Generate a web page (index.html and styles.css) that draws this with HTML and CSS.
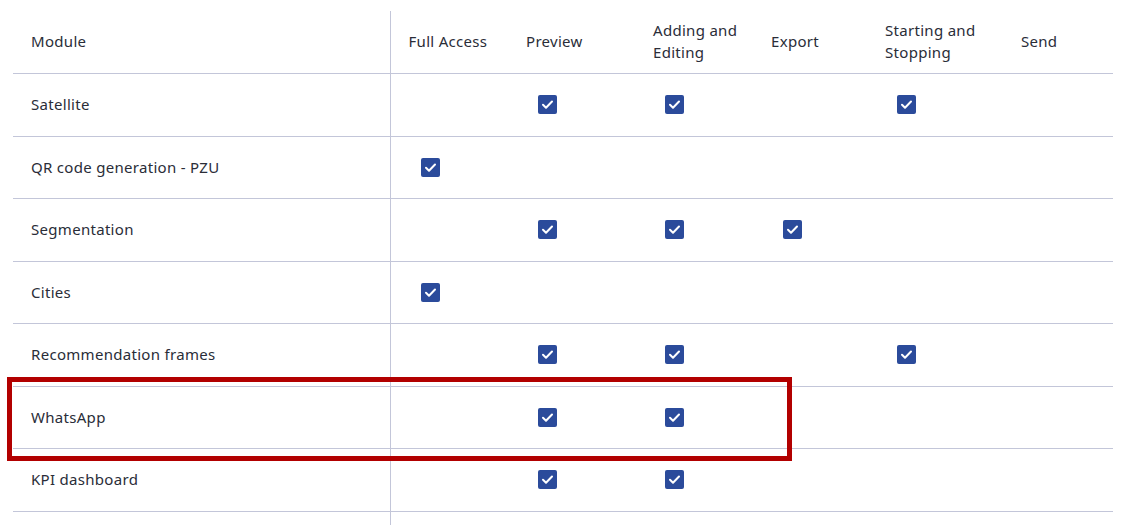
FILE: index.html
```html
<!DOCTYPE html>
<html>
<head>
<meta charset="utf-8">
<link rel="stylesheet" href="styles.css">
</head>
<body>
<div class="page">
  <table class="perm">
    <colgroup>
      <col class="c-mod"><col class="c-full"><col class="c-prev"><col class="c-add"><col class="c-exp"><col class="c-start"><col class="c-send">
    </colgroup>
    <thead>
      <tr>
        <th class="mod">Module</th>
        <th>Full Access</th>
        <th>Preview</th>
        <th>Adding and<br>Editing</th>
        <th>Export</th>
        <th>Starting and<br>Stopping</th>
        <th>Send</th>
      </tr>
    </thead>
    <tbody>
      <tr>
        <td class="mod">Satellite</td>
        <td></td>
        <td><span class="cb"><svg viewBox="0 0 19 19"><path d="M5 9.8l3 2.9 6-6.2"/></svg></span></td>
        <td><span class="cb"><svg viewBox="0 0 19 19"><path d="M5 9.8l3 2.9 6-6.2"/></svg></span></td>
        <td></td>
        <td><span class="cb"><svg viewBox="0 0 19 19"><path d="M5 9.8l3 2.9 6-6.2"/></svg></span></td>
        <td></td>
      </tr>
      <tr>
        <td class="mod">QR code generation - PZU</td>
        <td><span class="cb"><svg viewBox="0 0 19 19"><path d="M5 9.8l3 2.9 6-6.2"/></svg></span></td>
        <td></td><td></td><td></td><td></td><td></td>
      </tr>
      <tr>
        <td class="mod">Segmentation</td>
        <td></td>
        <td><span class="cb"><svg viewBox="0 0 19 19"><path d="M5 9.8l3 2.9 6-6.2"/></svg></span></td>
        <td><span class="cb"><svg viewBox="0 0 19 19"><path d="M5 9.8l3 2.9 6-6.2"/></svg></span></td>
        <td><span class="cb"><svg viewBox="0 0 19 19"><path d="M5 9.8l3 2.9 6-6.2"/></svg></span></td>
        <td></td><td></td>
      </tr>
      <tr>
        <td class="mod">Cities</td>
        <td><span class="cb"><svg viewBox="0 0 19 19"><path d="M5 9.8l3 2.9 6-6.2"/></svg></span></td>
        <td></td><td></td><td></td><td></td><td></td>
      </tr>
      <tr>
        <td class="mod">Recommendation frames</td>
        <td></td>
        <td><span class="cb"><svg viewBox="0 0 19 19"><path d="M5 9.8l3 2.9 6-6.2"/></svg></span></td>
        <td><span class="cb"><svg viewBox="0 0 19 19"><path d="M5 9.8l3 2.9 6-6.2"/></svg></span></td>
        <td></td>
        <td><span class="cb"><svg viewBox="0 0 19 19"><path d="M5 9.8l3 2.9 6-6.2"/></svg></span></td>
        <td></td>
      </tr>
      <tr>
        <td class="mod">WhatsApp</td>
        <td></td>
        <td><span class="cb"><svg viewBox="0 0 19 19"><path d="M5 9.8l3 2.9 6-6.2"/></svg></span></td>
        <td><span class="cb"><svg viewBox="0 0 19 19"><path d="M5 9.8l3 2.9 6-6.2"/></svg></span></td>
        <td></td><td></td><td></td>
      </tr>
      <tr>
        <td class="mod">KPI dashboard</td>
        <td></td>
        <td><span class="cb"><svg viewBox="0 0 19 19"><path d="M5 9.8l3 2.9 6-6.2"/></svg></span></td>
        <td><span class="cb"><svg viewBox="0 0 19 19"><path d="M5 9.8l3 2.9 6-6.2"/></svg></span></td>
        <td></td><td></td><td></td>
      </tr>
      <tr>
        <td class="mod"></td>
        <td></td><td></td><td></td><td></td><td></td><td></td>
      </tr>
    </tbody>
  </table>
  <div class="highlight"></div>
</div>
</body>
</html>
```
FILE: styles.css
```css
html, body {
  margin: 0;
  padding: 0;
  background: #ffffff;
  overflow: hidden;
}
body {
  font-family: "Noto Sans", "Open Sans", sans-serif;
  font-size: 15px;
  letter-spacing: 0.3px;
  color: #2a2d38;
}
.page {
  position: relative;
  padding: 11px 0 0 13px;
  height: 514px;
}
.perm {
  border-collapse: collapse;
  table-layout: fixed;
  width: 1100px;
}
.c-mod { width: 377px; }
.c-full { width: 118px; }
.c-prev { width: 127px; }
.c-add { width: 118px; }
.c-exp { width: 114px; }
.c-start { width: 136px; }
.c-send { width: 110px; }
.perm th {
  font-weight: 400;
  text-align: left;
  height: 59px;
  padding: 0 0 3px 18px;
  line-height: 22px;
  vertical-align: middle;
  border-bottom: 1px solid #c3c6d9;
}
.perm td {
  height: 60px;
  padding: 0 0 1.5px 18px;
  vertical-align: middle;
  border-bottom: 1px solid #c3c6d9;
}
.perm .mod {
  border-right: 1px solid #c3c6d9;
}
.cb {
  display: block;
  width: 19px;
  height: 19px;
  margin-left: 12px;
  margin-top: 1px;
  background: #2b4b9b;
  border-radius: 2px;
}
.cb svg {
  display: block;
  width: 19px;
  height: 19px;
}
.cb path {
  fill: none;
  stroke: #ffffff;
  stroke-width: 2;
  stroke-linecap: round;
  stroke-linejoin: round;
}
.highlight {
  position: absolute;
  left: 7px;
  top: 377px;
  width: 775px;
  height: 74px;
  border: 5px solid #b20000;
}
```
